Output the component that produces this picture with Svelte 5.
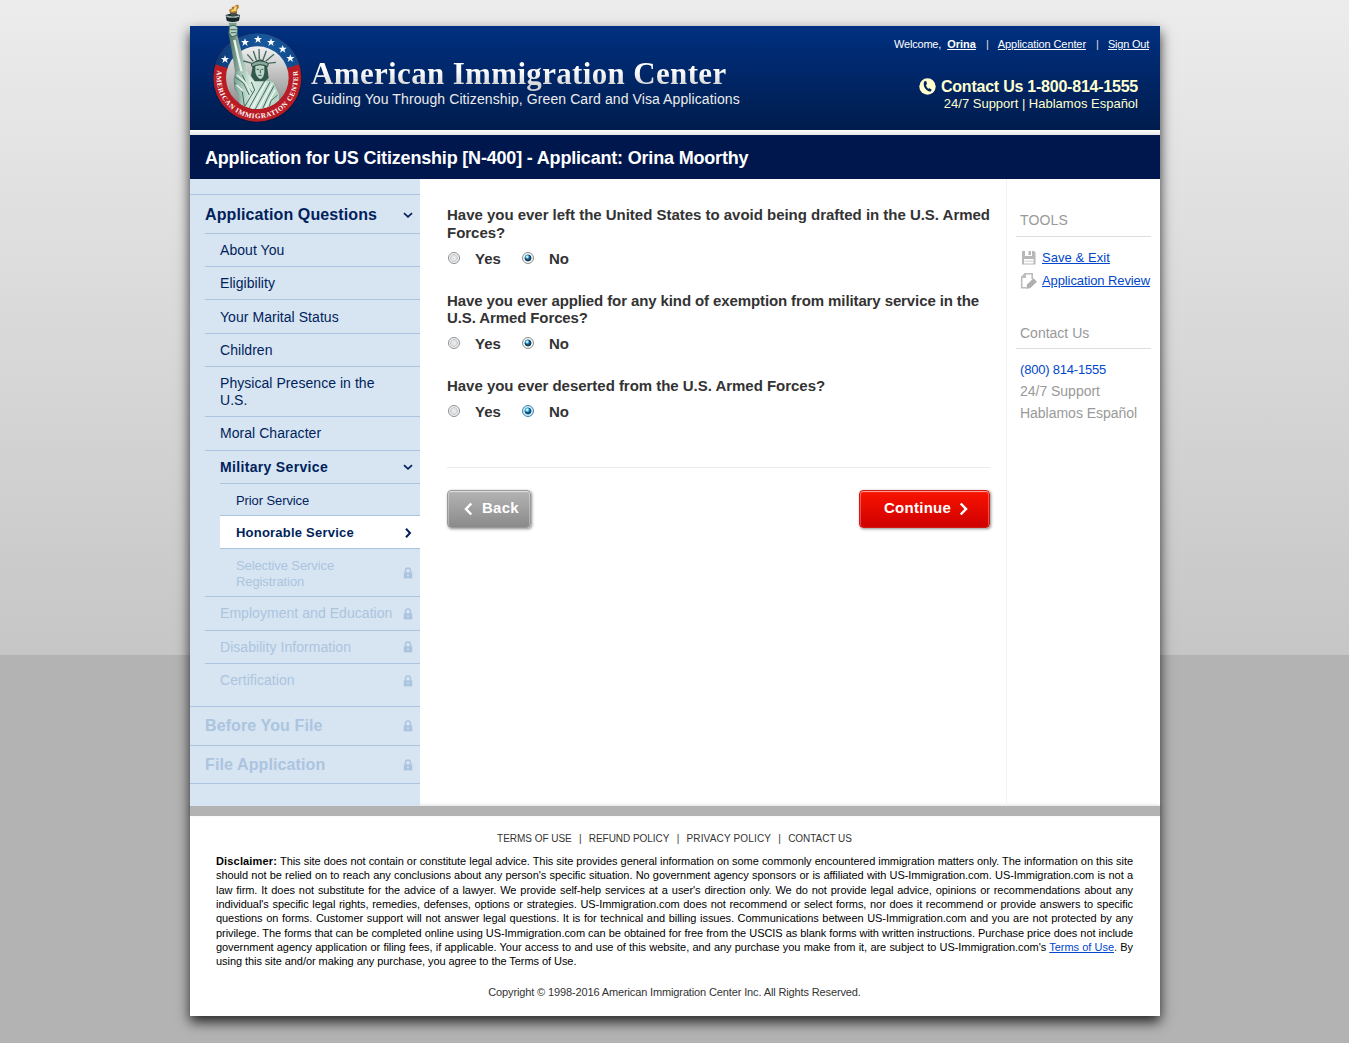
<script>
  const nav = [
    { text: 'Application Questions', level: 'top', height: 39, icon: 'down' },
    { text: 'About You', level: 'mid', height: 33 },
    { text: 'Eligibility', level: 'mid', height: 33 },
    { text: 'Your Marital Status', level: 'mid', height: 34, low: true },
    { text: 'Children', level: 'mid', height: 33 },
    { text: 'Physical Presence in the U.S.', level: 'mid', height: 50 },
    { text: 'Moral Character', level: 'mid', height: 34 },
    { text: 'Military Service', level: 'mid', height: 33, icon: 'down', open: true },
    { text: 'Prior Service', level: 'sub', height: 32, low: true },
    { text: 'Honorable Service', level: 'sub', height: 33, icon: 'right', current: true, low: true },
    { text: 'Selective Service Registration', level: 'sub', height: 48, icon: 'lock', low: true },
    { text: 'Employment and Education', level: 'mid', height: 34, icon: 'lock' },
    { text: 'Disability Information', level: 'mid', height: 33, icon: 'lock' },
    { text: 'Certification', level: 'mid', height: 34, icon: 'lock', last: true },
    { text: 'Before You File', level: 'top', height: 39, icon: 'lock' },
    { text: 'File Application', level: 'top', height: 38, icon: 'lock' }
  ];

  const questions = [
    { lines: ['Have you ever left the United States to avoid being drafted in the U.S. Armed', 'Forces?'], cls: 'qa' },
    { lines: ['Have you ever applied for any kind of exemption from military service in the', 'U.S. Armed Forces?'], cls: 'qb' },
    { lines: ['Have you ever deserted from the U.S. Armed Forces?'], cls: 'qc', focused: true }
  ];

  const disclaimer = [
    'This site does not contain or constitute legal advice. This site provides general information on some commonly encountered immigration matters only. The information on this site',
    "should not be relied on to reach any conclusions about any person's specific situation. No government agency sponsors or is affiliated with US-Immigration.com. US-Immigration.com is not a",
    "law firm. It does not substitute for the advice of a lawyer. We provide self-help services at a user's direction only. We do not provide legal advice, opinions or recommendations about any",
    "individual's specific legal rights, remedies, defenses, options or strategies. US-Immigration.com does not recommend or select forms, nor does it recommend or provide answers to specific",
    'questions on forms. Customer support will not answer legal questions. It is for technical and billing issues. Communications between US-Immigration.com and you are not protected by any',
    'privilege. The forms that can be completed online using US-Immigration.com can be obtained for free from the USCIS as blank forms with written instructions. Purchase price does not include'
  ];

  const stars = [[60, 178], [120, 127], [159, 118], [198, 127], [233, 147], [256, 175]];
  const star = 'M0-12 3-4 12-4 5 2 8 11 0 5-8 11-5 2-12-4-3-4Z';
</script>

<div class="page">
  <div class="sheet">
    <header>
      <svg class="logo" viewBox="0 0 315 390" width="105" height="130">
        <defs>
          <linearGradient id="disc" x1="0" y1="0" x2="0" y2="1">
            <stop offset="0" stop-color="#f0f0f0" /><stop offset="1" stop-color="#858585" />
          </linearGradient>
          <linearGradient id="blue" x1="0" y1="0" x2="1" y2="0">
            <stop offset="0" stop-color="#0c3a78" /><stop offset=".6" stop-color="#17589c" /><stop offset="1" stop-color="#0f4a8c" />
          </linearGradient>
          <linearGradient id="robe" x1="0" y1="0" x2="1" y2="0">
            <stop offset="0" stop-color="#7fa898" /><stop offset=".35" stop-color="#d6eadf" /><stop offset="1" stop-color="#b4d2c5" />
          </linearGradient>
          <linearGradient id="arm" x1="0" y1="0" x2="1" y2="0">
            <stop offset="0" stop-color="#4a6d61" /><stop offset=".4" stop-color="#cce4d8" /><stop offset="1" stop-color="#6f9688" />
          </linearGradient>
          <clipPath id="inner"><path d="M40 0H251V233A94 94 0 0 1 63 233L40 200Z" /></clipPath>
        </defs>
        <circle cx="157" cy="235" r="134" fill="#001337" opacity=".45" />
        <circle cx="157" cy="233" r="132" fill="#b91c24" />
        <path d="M31 193A132 132 0 0 1 283 193L157 233Z" fill="url(#blue)" />
        <circle cx="157" cy="233" r="94" fill="url(#disc)" />
        {#each stars as [x, y]}
          <path d={star} fill="#fff" transform="translate({x} {y})" />
        {/each}
        <path id="ring" d="M37 211A122 122 0 1 0 277 211" fill="none" />
        <text class="ring-text"><textPath href="#ring" textLength="426">AMERICAN IMMIGRATION CENTER</textPath></text>

        <g clip-path="url(#inner)">
          <path d="M70 98Q76 86 94 92L104 134 118 185 130 222 145 236 181 236 208 247 222 278 224 335H104L101 290 88 266 86 238 90 215 80 150Z" fill="url(#arm)" />
          <path d="M92 218Q108 200 126 222L142 240 178 240 206 247 222 282 222 335H105L108 290 90 262Z" fill="url(#robe)" />
          <g fill="none" stroke="#426c5f" stroke-width="3">
            <path d="M91 232 115 249 133 285M88 248 111 270 120 330M112 225 128 260 142 278M139 246 149 270 117 323" />
            <path d="M179 243 158 278 132 325M195 246 173 287 151 327M207 257 188 293 172 328M218 285 198 302 190 328" />
          </g>
          <g fill="none" stroke="#edf8f1" stroke-width="4">
            <path d="M96 225 122 248 136 276M94 254 115 274M184 247 165 281 141 327M201 252 181 290 161 327M211 269 197 294 181 326" />
          </g>
          <path d="M88 120 100 174 110 214" stroke="#e6f5ec" stroke-width="7" fill="none" />
        </g>
        <path d="M143 198Q145 180 166 178 186 182 187 205L191 234 180 244H149L138 228Z" fill="#31574b" />
        <path d="M151 198Q165 187 178 199L178 218Q174 237 165 237 154 231 151 216Z" fill="#b9d6c9" />
        <path d="M155 208h7M169 208h6M166 209v11M160 226h10" stroke="#395f53" stroke-width="3" />
        <path d="M139 192Q163 174 190 190L188 200Q165 188 142 201Z" fill="#86a999" stroke="#294b41" stroke-width="3" />
        <g stroke="#42695d" stroke-width="4">
          <path d="M142 190 115 183M145 184 127 163M154 180 145 153M163 178 162 147M174 180 184 152M182 184 207 163M188 190 213 187" />
        </g>
        <path d="M71 68H95L90 106H79Z" fill="#7fa193" />
        <path d="M73 79Q92 71 98 85L96 105 81 111 72 98Z" fill="#b3d0c2" stroke="#3e6356" stroke-width="3" />
        <path d="M76 89H95M77 98H94" stroke="#466b5f" stroke-width="3" />
        <path d="M62 45Q83 36 105 45L102 62Q83 70 65 62Z" fill="#17262b" />
        <path d="M64 48Q83 55 103 48" stroke="#a6b8b5" stroke-width="4" fill="none" />
        <path d="M74 35H96L94 47H77Z" fill="#45514d" />
        <path d="M76 38Q67 26 80 27 78 17 90 20 91 12 100 15 105 22 96 29 99 35 92 39Z" fill="#b77a20" />
        <path d="M80 35Q75 27 86 29 86 20 97 19 93 25 94 32Z" fill="#f4d778" />
      </svg>
      <div class="brand">
        <h1>American Immigration Center</h1>
        <p>Guiding You Through Citizenship, Green Card and Visa Applications</p>
      </div>
      <div class="account">
        <div class="session">
          <span class="welcome">Welcome,</span><a class="user" href="#me">Orina</a><i>|</i><a class="ac" href="#center">Application Center</a><i>|</i><a class="so" href="#out">Sign Out</a>
        </div>
        <div class="phone">
          <svg width="17" height="17" viewBox="0 0 17 17">
            <circle cx="8.5" cy="8.5" r="8.2" fill="#ffffcf" />
            <path d="M6 3.1 7.6 3.6 7.9 6.2 6.9 7.1Q7.4 9.3 9.2 10.7L10.6 10.2 12.6 11.8 12 13.3Q10.4 14 8.6 12.8 4.6 10.1 4.7 5.3 4.9 3.7 6 3.1Z" fill="#00235c" />
          </svg>
          <strong>Contact Us 1-800-814-1555</strong>
        </div>
        <div class="support">24/7 Support | Hablamos Español</div>
      </div>
    </header>
    <div class="stripe"></div>
    <h2>Application for US Citizenship [N-400] - Applicant: Orina Moorthy</h2>

    <div class="body">
      <nav>
        {#each nav as n}
          <div class="row {n.level}" class:open={n.open} class:current={n.current} class:locked={n.icon === 'lock'} class:last={n.last} class:low={n.low} style:height="{n.height}px">
            <span>{n.text}</span>
            {#if n.icon === 'down'}
              <svg width="10" height="8" viewBox="0 0 10 8"><path d="M1 2.2 5 5.8 9 2.2" fill="none" stroke="#001f5c" stroke-width="1.7" /></svg>
            {:else if n.icon === 'right'}
              <svg width="10" height="10" viewBox="0 0 10 10"><path d="M3 .8 7 5 3 9.2" fill="none" stroke="#001f5c" stroke-width="2" /></svg>
            {:else if n.icon === 'lock'}
              <svg width="10" height="12" viewBox="0 0 10 12">
                <path d="M2.5 6V3.3Q2.7 1 5 1T7.5 3.3V6" fill="none" stroke="#abc4e0" stroke-width="1.5" />
                <path d="M.8 5.3H9.2V11.4H.8Z" fill="#abc4e0" /><path d="M4.3 7.5H5.7V9H4.3Z" fill="#d7e4f1" />
              </svg>
            {/if}
          </div>
        {/each}
        <div class="end"></div>
      </nav>

      <main>
        {#each questions as q}
          <section>
            <div class="question {q.cls}">{#each q.lines as l}<div>{l}</div>{/each}</div>
            <div class="answers">
              <span class="radio"></span><b class="yes">Yes</b>
              <span class="radio on" class:focused={q.focused}></span><b>No</b>
            </div>
          </section>
        {/each}
        <div class="actions">
          <button class="back">
            <svg width="9" height="14" viewBox="0 0 9 14"><path d="M7.3 1.5 2 7 7.3 12.5" fill="none" stroke="#fff" stroke-width="2.5" /></svg>
            Back
          </button>
          <button class="next">
            Continue
            <svg width="9" height="14" viewBox="0 0 9 14"><path d="M1.7 1.5 7 7 1.7 12.5" fill="none" stroke="#fff" stroke-width="2.5" /></svg>
          </button>
        </div>
      </main>

      <aside>
        <h3 class="tools">TOOLS</h3>
        <div class="tool">
          <svg width="18" height="18" viewBox="0 0 18 18">
            <path d="M2 2H5V7H12V2H14L15.5 3.5V15.5H2Z" fill="#b8b8b8" />
            <path d="M5 1H12V7H5ZM4 10H13.5V14.5H4Z" fill="#fff" /><path d="M8.5 2H11V6H8.5Z" fill="#b8b8b8" /><path d="M4.5 12.2H13" stroke="#ccc" />
          </svg>
          <a class="save" href="#save">Save &amp; Exit</a>
        </div>
        <div class="tool">
          <svg width="18" height="18" viewBox="0 0 18 18">
            <path d="M6 15.8H1.7V5.2L5 1.8H12.2V7" fill="none" stroke="#bcbcbc" stroke-width="1.6" /><path d="M1.5 6H6V1.5Z" fill="#bcbcbc" />
            <path d="M13.4 6.2 17 9.8 10.4 16 6.2 17 7 12.6Z" fill="#b0b0b0" />
          </svg>
          <a class="review" href="#review">Application Review</a>
        </div>
        <h3 class="contact">Contact Us</h3>
        <div class="line num">(800) 814-1555</div>
        <div class="line">24/7 Support</div>
        <div class="line">Hablamos Español</div>
      </aside>
    </div>
    <div class="divider"></div>

    <footer>
      <div class="links"><span>TERMS OF USE</span><i>|</i><span>REFUND POLICY</span><i>|</i><span class="pp">PRIVACY POLICY</span><i>|</i><span>CONTACT US</span></div>
      <div class="disclaimer">
        {#each disclaimer as d, i}<div>{#if i === 0}<b>Disclaimer:</b>{' '}{/if}{d}</div>{/each}
        <div>government agency application or filing fees, if applicable. Your access to and use of this website, and any purchase you make from it, are subject to US-Immigration.com's <a href="#terms">Terms of Use</a>. By</div>
        <div class="tail">using this site and/or making any purchase, you agree to the Terms of Use.</div>
      </div>
      <div class="copy">Copyright © 1998-2016 American Immigration Center Inc. All Rights Reserved.</div>
    </footer>
  </div>
</div>

<style>
  .page {
    box-sizing: border-box;
    height: 1043px;
    padding-top: 26px;
    overflow: hidden;
    background: linear-gradient(#ececec, #c6c6c6) 0 0 / 100% 655px no-repeat #b3b3b3;
    font-family: 'Liberation Sans', Arial, sans-serif;
  }
  .sheet { width: 970px; height: 990px; margin-left: 190px; background: #fff; box-shadow: 0 6px 12px rgba(0, 0, 0, .8); }
  a { color: inherit; text-decoration: underline; }
  i { font-style: normal; }

  header { position: relative; display: flex; justify-content: space-between; height: 104px; background: linear-gradient(#003080, #001c4d); }
  .logo { position: absolute; left: 15px; top: -26px; }
  .ring-text { font: bold 21px 'Liberation Serif', serif; fill: #fff; }
  .brand { padding: 30px 0 0 121px; white-space: nowrap; }
  h1 {
    margin: 0; font: bold 31px/36px 'Liberation Serif', 'Times New Roman', serif; letter-spacing: .34px;
    color: transparent; background: linear-gradient(#fff 40%, #d4d4d4 82%); background-clip: text; -webkit-background-clip: text;
  }
  .brand p { margin: -1px 0 0 1px; font-size: 14px; line-height: 16px; letter-spacing: .1px; color: #ececec; }
  .account { display: flex; flex-direction: column; align-items: flex-end; white-space: nowrap; }
  .session { display: flex; height: 36px; padding-right: 11px; align-items: center; font-size: 11px; color: #fff; }
  .session i { width: 22px; text-indent: 1px; text-align: center; color: #e6d8d8; }
  .welcome { margin-right: 6px; letter-spacing: -.2px; }
  .user { font-weight: bold; }
  .ac { letter-spacing: -.1px; }
  .so { letter-spacing: -.22px; }
  .phone { display: flex; align-items: center; gap: 5px; height: 18px; margin-top: 15px; padding-right: 22px; font-size: 16px; letter-spacing: -.23px; color: #ffffcf; }
  .phone strong { padding-top: 1px; }
  .support { padding: 1px 22px 0 0; font-size: 13px; line-height: 16px; color: #ffffcf; }
  .stripe { height: 5px; background: linear-gradient(#fff, #e6e6e6); }
  h2 { margin: 0; height: 44px; padding-left: 15px; background: #00174d; color: #fff; font: bold 18px/46px 'Liberation Sans', Arial, sans-serif; letter-spacing: -.185px; }

  .body { display: flex; height: 627px; }
  nav { box-sizing: border-box; width: 230px; padding-top: 15px; background: #d7e4f1; color: #001f5c; }
  .row { box-sizing: border-box; display: flex; align-items: center; justify-content: space-between; padding-right: 7px; border-top: 1px solid #abc4e0; }
  .top { padding-left: 15px; font-size: 16px; font-weight: bold; letter-spacing: .11px; }
  .top:first-child { padding-top: 2px; }
  .mid { margin-left: 15px; padding-left: 15px; font-size: 14px; line-height: 17px; letter-spacing: .05px; }
  .mid span { max-width: 174px; }
  .sub { margin-left: 30px; padding-left: 16px; font-size: 13px; line-height: 16px; letter-spacing: -.1px; }
  .sub span { max-width: 120px; }
  .row span { flex: 1 0 auto; }
  .low span { padding-top: 2px; }
  .open { font-weight: bold; letter-spacing: .33px; }
  .current { font-weight: bold; letter-spacing: .22px; background: #fff; }
  .current svg { margin-top: 1px; }
  .locked { color: #abc4e0; }
  .last { margin-bottom: 9px; }
  .end { border-top: 1px solid #abc4e0; }

  main { width: 543px; padding: 27px 16px 0 27px; color: #333; font-size: 15px; font-weight: bold; }
  section { margin-bottom: 23px; }
  .question { line-height: 17.5px; white-space: nowrap; }
  .qa { letter-spacing: -.02px; }
  .qb { letter-spacing: -.107px; }
  .qc { letter-spacing: -.03px; }
  .answers { display: flex; align-items: center; height: 21px; margin-top: 6.5px; }
  .radio {
    box-sizing: border-box; width: 12px; height: 12px; margin: 0 15px 1px 1px; border: 1px solid #8e8f8f; border-radius: 50%;
    background: radial-gradient(circle, #e6e8ea 25%, #c9cdd1 50%, #f4f4f4 58%);
  }
  .yes { width: 46px; }
  .on { background: radial-gradient(circle at 42% 38%, #c8f2ff 0 8%, #3fb0de 18%, transparent 30%), radial-gradient(circle, #12517e 28%, #17354b 42%, #f2f4f5 54%); }
  .focused { border-color: #3c7fb1; background: radial-gradient(circle at 42% 38%, #d5f7ff 0 8%, #3fb8e8 20%, transparent 32%), radial-gradient(circle, #0c5c95 28%, #1c4a68 42%, #cdecf8 54%); }
  .actions { display: flex; justify-content: space-between; margin-top: 45px; padding-top: 22px; border-top: 1px solid #ebebeb; }
  button {
    display: flex; align-items: center; height: 38px; padding: 0 0 3px; border-radius: 4px; color: #fff;
    font: bold 15px 'Liberation Sans', Arial, sans-serif; letter-spacing: .27px; box-shadow: inset 0 1px 1px rgba(255, 255, 255, .65), inset 1px 0 rgba(255, 255, 255, .25), inset -1px 0 rgba(255, 255, 255, .25), 1px 1px 3px rgba(0, 0, 0, .45);
  }
  .back { width: 84px; padding-left: 16px; gap: 9px; border: 1px solid #999; background: linear-gradient(#b4b4b4, #8a8a8a); }
  .next { width: 131px; padding-left: 24px; gap: 8px; border: 1px solid #cf1a12; background: linear-gradient(#fa1400, #ce0000); }
  button svg { margin-top: 3px; }

  aside { box-sizing: border-box; flex: 1; padding: 30px 9px 0; border-left: 1px solid #f2f2f2; color: #999; white-space: nowrap; }
  h3 { margin: 0; padding-left: 4px; font-size: 14px; font-weight: normal; border-bottom: 1px solid #ddd; }
  .tools { height: 27px; line-height: 22px; letter-spacing: .16px; margin-bottom: 9px; }
  .contact { height: 26px; line-height: 22px; margin: 30px 0 10px; }
  .tool { display: flex; align-items: center; gap: 4px; height: 23px; padding-left: 4px; font-size: 13px; color: #0047cc; }
  .save { letter-spacing: .07px; }
  .review { letter-spacing: -.1px; }
  .line { height: 22px; padding-left: 4px; font-size: 14px; line-height: 20px; letter-spacing: -.02px; }
  .num { font-size: 13px; line-height: 22px; letter-spacing: -.2px; color: #0047cc; }

  .divider { height: 10px; background: #b3b3b3; box-shadow: 0 -1px 3px rgba(0, 0, 0, .12); }
  footer { padding: 15px 27px 0 26px; font-size: 11px; color: #000; }
  .links { display: flex; justify-content: center; height: 16px; line-height: 16px; font-size: 10px; letter-spacing: -.03px; color: #333; }
  .links i { width: 17px; text-align: center; }
  .pp { letter-spacing: .16px; }
  .disclaimer { margin-top: 7px; line-height: 14.33px; letter-spacing: -.06px; white-space: nowrap; }
  .disclaimer div { text-align: justify; text-align-last: justify; white-space: normal; height: 14.33px; }
  .disclaimer .tail { text-align-last: left; }
  .disclaimer b { letter-spacing: .16px; }
  .disclaimer a { color: #0047cc; }
  .copy { margin-top: 16px; text-align: center; line-height: 14px; letter-spacing: -.13px; color: #333; }
</style>
